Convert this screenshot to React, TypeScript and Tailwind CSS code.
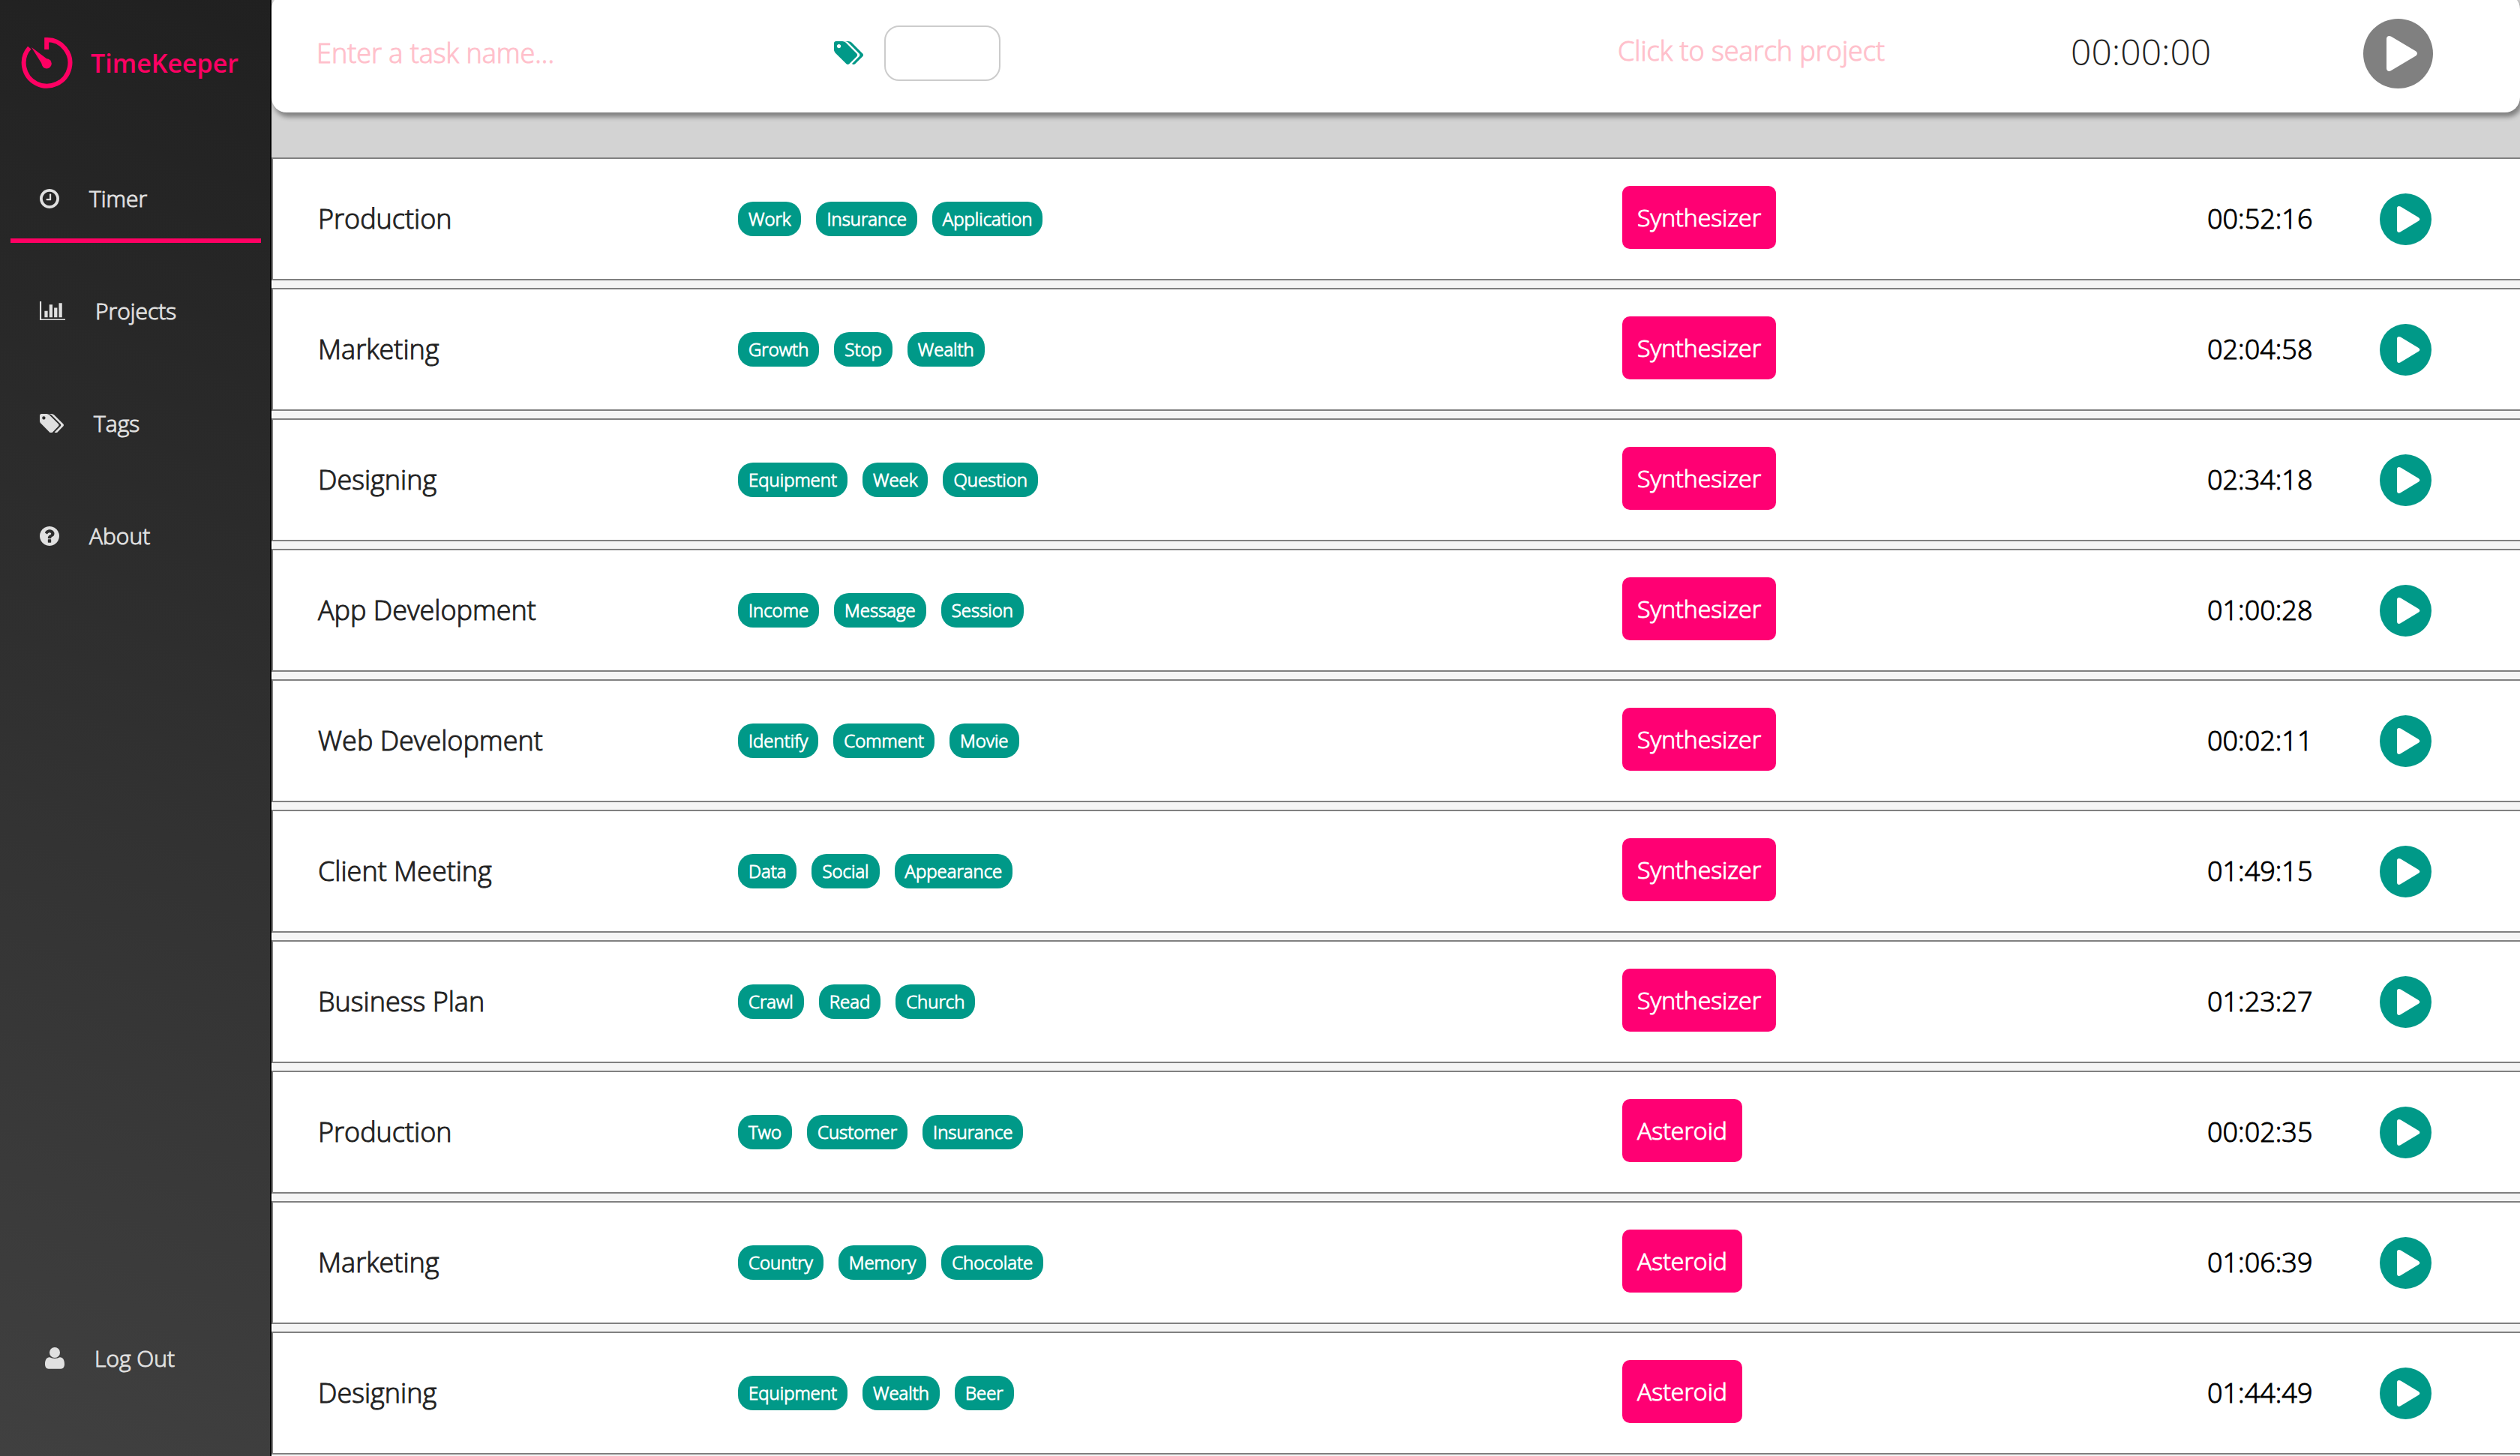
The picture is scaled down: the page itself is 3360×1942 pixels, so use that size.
import React from "react";

type IconProps = { className?: string };

const ClockIcon = ({ className }: IconProps) => (
  <svg viewBox="128 128 1536 1536" fill="currentColor" className={className} aria-hidden="true">
    <path d="M1024 544v448q0 14-9 23t-23 9h-320q-14 0-23-9t-9-23v-64q0-14 9-23t23-9h224v-352q0-14 9-23t23-9h64q14 0 23 9t9 23zm416 352q0-148-73-273t-198-198-273-73-273 73-198 198-73 273 73 273 198 198 273 73 273-73 198-198 73-273zm224 0q0 209-103 385.5t-279.5 279.5-385.5 103-385.5-103-279.5-279.5-103-385.5 103-385.5 279.5-279.5 385.5-103 385.5 103 279.5 279.5 103 385.5z" />
  </svg>
);

const ChartIcon = ({ className }: IconProps) => (
  <svg viewBox="0 128 2048 1536" fill="currentColor" className={className} aria-hidden="true">
    <path d="M640 896v512h-256v-512h256zm384-512v1024h-256v-1024h256zm1024 1152v128h-2048v-1536h128v1408h1920zm-640-896v768h-256v-768h256zm384-384v1152h-256v-1152h256z" />
  </svg>
);

const TagsIcon = ({ className }: IconProps) => (
  <svg viewBox="0 128 1899 1515" fill="currentColor" className={className} aria-hidden="true">
    <path d="M448 448q0-53-37.5-90.5t-90.5-37.5-90.5 37.5-37.5 90.5 37.5 90.5 90.5 37.5 90.5-37.5 37.5-90.5zm1067 576q0 53-37 90l-491 492q-39 37-91 37-53 0-90-37l-715-716q-38-37-64.5-101t-26.5-117v-416q0-52 38-90t90-38h416q53 0 117 26.5t102 64.5l715 714q37 39 37 91zm384 0q0 53-37 90l-491 492q-39 37-91 37-36 0-59-14t-53-45l470-470q37-37 37-90 0-52-37-91l-715-714q-38-38-102-64.5t-117-26.5h224q53 0 117 26.5t102 64.5l715 714q37 39 37 91z" />
  </svg>
);

const HelpIcon = ({ className }: IconProps) => (
  <svg viewBox="128 128 1536 1536" fill="currentColor" className={className} aria-hidden="true">
    <path d="M1024 1376v-192q0-14-9-23t-23-9h-192q-14 0-23 9t-9 23v192q0 14 9 23t23 9h192q14 0 23-9t9-23zm256-672q0-88-55.5-163t-138.5-116-170-41q-243 0-371 213-15 24 8 42l132 100q7 6 19 6 16 0 25-12 53-68 86-92 34-24 86-24 48 0 85.5 26t37.5 59q0 38-20 61t-68 45q-63 28-115.5 86.5t-52.5 125.5v36q0 14 9 23t23 9h192q14 0 23-9t9-23q0-19 21.5-49.5t54.5-49.5q32-18 49-28.5t46-35 44.5-48 28-60.5 12.5-81zm384 192q0 209-103 385.5t-279.5 279.5-385.5 103-385.5-103-279.5-279.5-103-385.5 103-385.5 279.5-279.5 385.5-103 385.5 103 279.5 279.5 103 385.5z" />
  </svg>
);

const UserIcon = ({ className }: IconProps) => (
  <svg viewBox="0 0 76 84" fill="currentColor" className={className} aria-hidden="true">
    <circle cx="38" cy="20.5" r="20.5" />
    <path d="M18 39Q27 44 38 44T58 39C70 39 76 50 76 66C76 77 71 84 62 84H14C5 84 0 77 0 66C0 50 6 39 18 39Z" />
  </svg>
);

const PlayIcon = ({ className }: IconProps) => (
  <svg viewBox="0 0 279 279" className={className} aria-hidden="true">
    <circle cx="139.500" cy="139.500" r="139.500" fill="currentColor" />
    <path d="M93 80C93 69 103 66 112 71L209 129C218 135 218 143 209 149L112 207C103 213 93 209 93 198Z" fill="white" />
  </svg>
);

const LogoIcon = ({ className }: IconProps) => (
  <svg viewBox="0 0 208 204" className={className} aria-hidden="true">
    <path d="M34 41A93 93 0 1 0 103 9V48" fill="none" stroke="currentColor" strokeWidth="18" />
    <circle cx="103" cy="105" r="20" fill="currentColor" />
    <path d="M42 39L104 86L84 106Z" fill="currentColor" />
  </svg>
);

type Task = { name: string; tags: string[]; project: string; time: string };

const tasks: Task[] = [
  { name: "Production", tags: ["Work", "Insurance", "Application"], project: "Synthesizer", time: "00:52:16" },
  { name: "Marketing", tags: ["Growth", "Stop", "Wealth"], project: "Synthesizer", time: "02:04:58" },
  { name: "Designing", tags: ["Equipment", "Week", "Question"], project: "Synthesizer", time: "02:34:18" },
  { name: "App Development", tags: ["Income", "Message", "Session"], project: "Synthesizer", time: "01:00:28" },
  { name: "Web Development", tags: ["Identify", "Comment", "Movie"], project: "Synthesizer", time: "00:02:11" },
  { name: "Client Meeting", tags: ["Data", "Social", "Appearance"], project: "Synthesizer", time: "01:49:15" },
  { name: "Business Plan", tags: ["Crawl", "Read", "Church"], project: "Synthesizer", time: "01:23:27" },
  { name: "Production", tags: ["Two", "Customer", "Insurance"], project: "Asteroid", time: "00:02:35" },
  { name: "Marketing", tags: ["Country", "Memory", "Chocolate"], project: "Asteroid", time: "01:06:39" },
  { name: "Designing", tags: ["Equipment", "Wealth", "Beer"], project: "Asteroid", time: "01:44:49" },
];

const navItems = [
  { label: "Timer", Icon: ClockIcon, size: "w-[26px]", active: true },
  { label: "Projects", Icon: ChartIcon, size: "w-[34px]", active: false },
  { label: "Tags", Icon: TagsIcon, size: "w-8", active: false },
  { label: "About", Icon: HelpIcon, size: "w-[26px]", active: false },
];

function Sidebar() {
  return (
    <aside className="flex w-[362px] shrink-0 flex-col border-r-2 border-black bg-linear-[200deg,#202020,#404040] text-[30px] text-[#e0e0e0]">
      <a href="#home" className="mt-[50px] ml-7 flex items-center gap-6 text-[#ff0063]">
        <LogoIcon className="w-[69px]" />
        <span className="text-[34px] leading-10 font-semibold">TimeKeeper</span>
      </a>
      <nav className="mt-[94px] pr-3 pl-3.5 [-webkit-text-stroke-width:1px]">
        <ul>
          {navItems.map(({ label, Icon, size, active }) => (
            <li key={label} className="h-[150px]">
              <a
                href={"#" + label.toLowerCase()}
                className={
                  active
                    ? "flex h-28 items-center gap-10 border-b-6 border-[#ff0063] pl-[39px]"
                    : "flex h-28 items-center gap-10 border-b-6 border-transparent pl-[39px]"
                }
              >
                <Icon className={size} />
                <span>{label}</span>
              </a>
            </li>
          ))}
        </ul>
      </nav>
      <button
        type="button"
        className="mt-auto mb-[108px] ml-[60px] flex items-center gap-10 self-start [-webkit-text-stroke-width:1px]"
      >
        <UserIcon className="w-[26px]" />
        <span>Log Out</span>
      </button>
    </aside>
  );
}

function TimerBar() {
  return (
    <header className="bg-[#d3d3d3] pb-[60px]">
      <form className="-mt-2 flex h-[158px] items-center rounded-[20px] bg-white pr-[116px] pl-[60px] shadow-[3px_6px_6px_#808080]">
        <input
          type="text"
          aria-label="Task name"
          placeholder="Enter a task name..."
          className="min-w-0 flex-1 bg-transparent text-[36px] outline-none [-webkit-text-stroke-width:1px] placeholder:text-[#ffc0cb]"
        />
        <div className="flex w-[1045px] shrink-0 items-center gap-7">
          <TagsIcon className="w-[39px] text-[#009988]" />
          <input type="text" aria-label="Tags" className="h-[74px] w-[155px] rounded-[20px] border-2 border-[#ccc] px-4" />
        </div>
        <input
          type="text"
          aria-label="Project"
          placeholder="Click to search project"
          className="mb-1.5 w-[604px] shrink-0 bg-transparent text-[36px] outline-none [-webkit-text-stroke-width:1px] placeholder:text-[#ffc0cb]"
        />
        <output className="mb-1 w-[390px] shrink-0 text-[48px] text-[#222]">00:00:00</output>
        <button type="button" aria-label="Start timer" className="shrink-0 text-[#808080]">
          <PlayIcon className="w-[93px]" />
        </button>
      </form>
    </header>
  );
}

function TaskRow({ task }: { task: Task }) {
  return (
    <li>
      <div className="flex h-[164px] items-center border-y-2 border-l-2 border-[#808080] bg-white pr-[118px] pl-[60px] [-webkit-text-stroke-width:1px]">
        <h2 className="w-[560px] shrink-0 text-[36px] text-[#222]">{task.name}</h2>
        <ul className="flex flex-1 gap-5">
          {task.tags.map((tag) => (
            <li key={tag} className="rounded-[20px] bg-[#009988] px-3.5 text-[24px] leading-[46px] text-white">
              {tag}
            </li>
          ))}
        </ul>
        <div className="w-[780px] shrink-0 pb-1">
          <span className="inline-block rounded-[10px] bg-[#ff0073] px-5 text-[32px] leading-[84px] text-white">{task.project}</span>
        </div>
        <time className="w-[230px] shrink-0 text-[36px] text-black">{task.time}</time>
        <button type="button" aria-label={"Start " + task.name} className="shrink-0 text-[#009988]">
          <PlayIcon className="w-[69px]" />
        </button>
      </div>
      <div className="ml-0.5 h-2.5 bg-[#f5f5f5]" />
    </li>
  );
}

export default function App() {
  return (
    <div className="flex h-screen overflow-hidden bg-white font-['Open_Sans',sans-serif] font-light">
      <Sidebar />
      <main className="min-w-0 flex-1 overflow-hidden">
        <TimerBar />
        <ul>
          {tasks.map((task) => (
            <TaskRow key={task.project + task.name} task={task} />
          ))}
        </ul>
      </main>
    </div>
  );
}
